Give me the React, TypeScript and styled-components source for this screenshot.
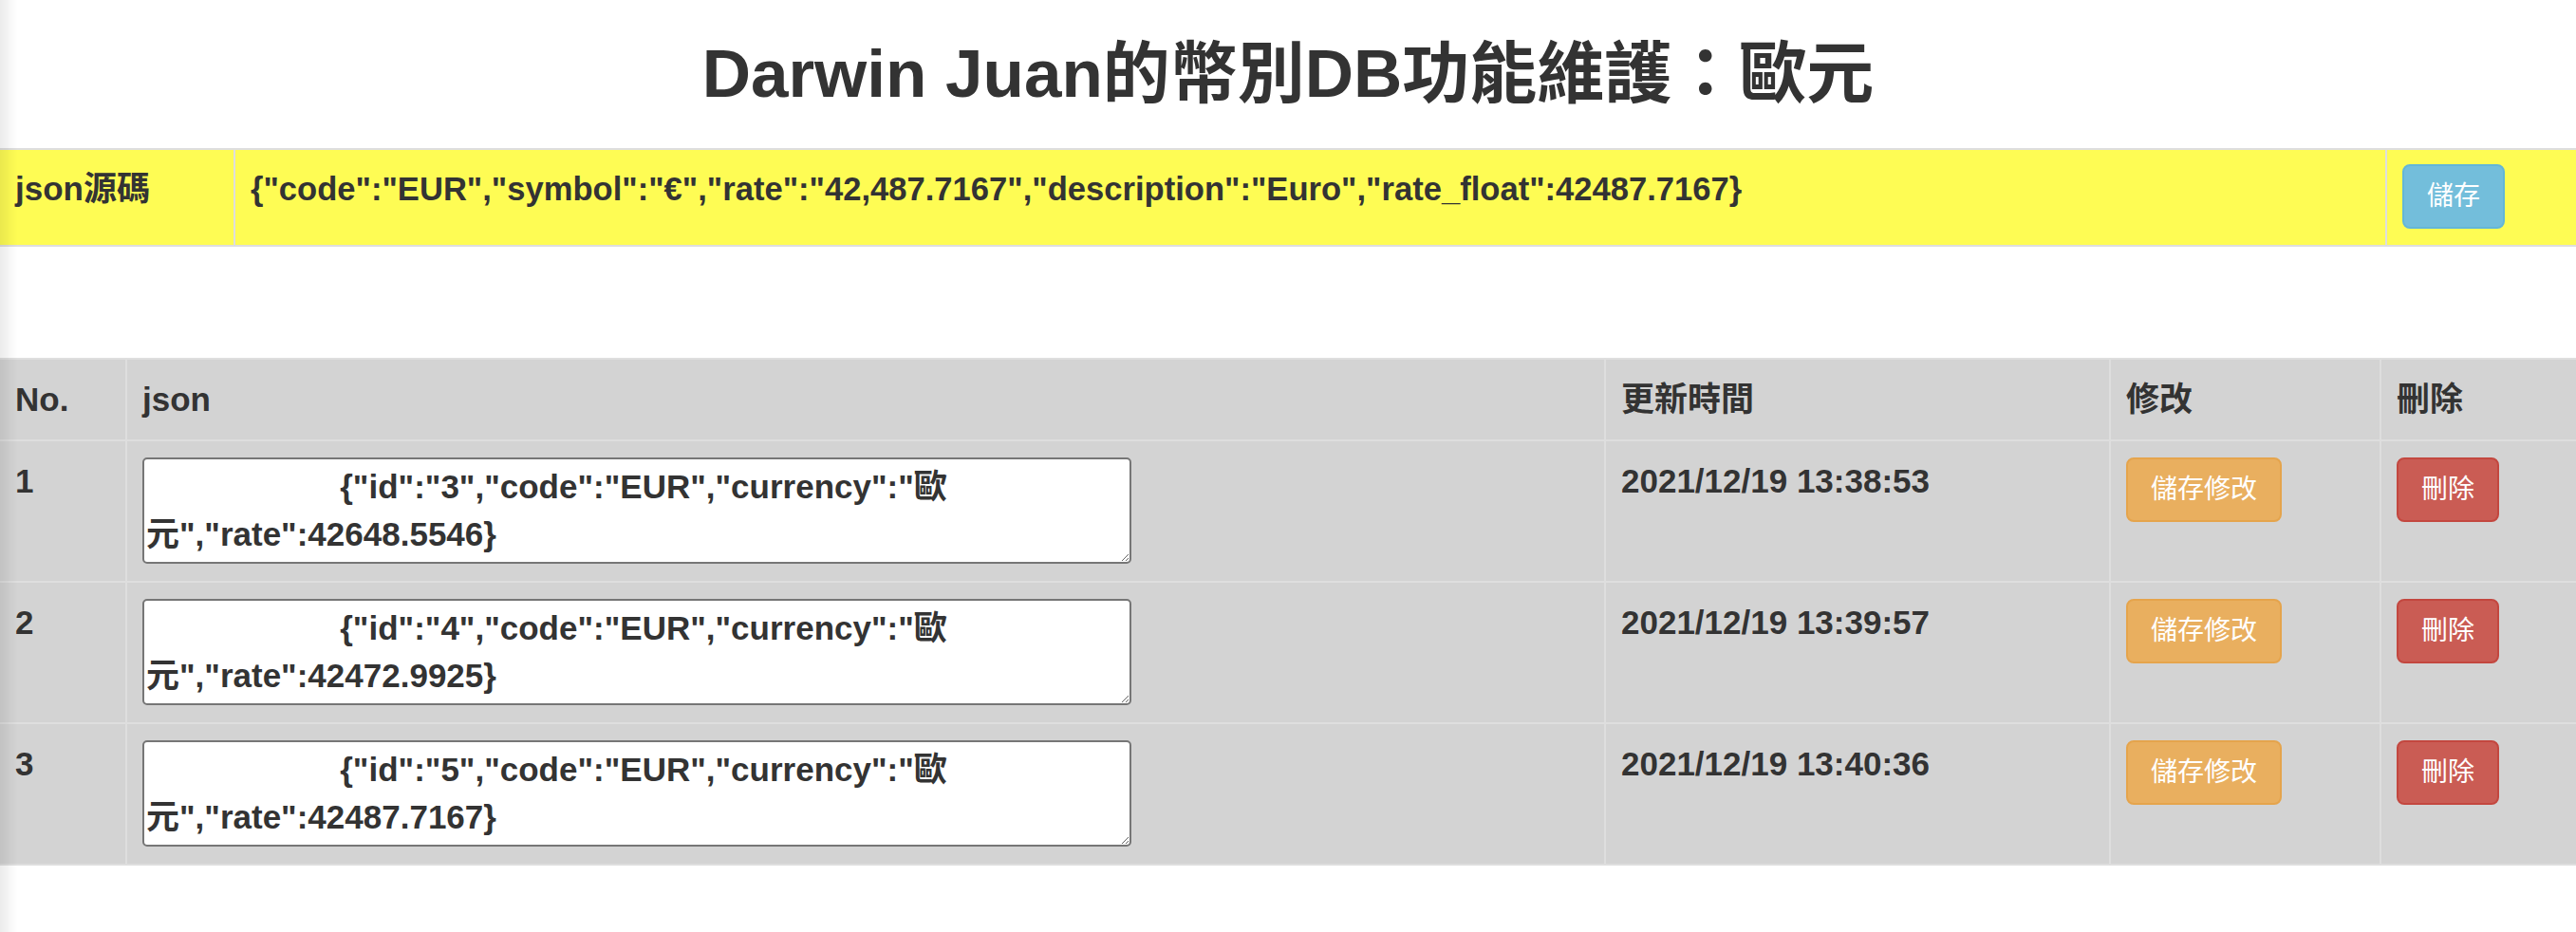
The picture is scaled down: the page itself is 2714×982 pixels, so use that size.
import React from "react";
import styled, { createGlobalStyle, css } from "styled-components";

const FONT = '"Liberation Sans", "Noto Sans CJK TC", Arial, sans-serif';

const GlobalStyle = createGlobalStyle`
  html, body {
    margin: 0;
    padding: 0;
    background: #ffffff;
  }
  body {
    font-family: ${FONT};
    font-size: 35px;
    line-height: 50px;
    font-weight: 700;
    color: #333333;
  }
`;

const rows = [
  { no: 1, id: "3", rate: "42648.5546", time: "2021/12/19 13:38:53" },
  { no: 2, id: "4", rate: "42472.9925", time: "2021/12/19 13:39:57" },
  { no: 3, id: "5", rate: "42487.7167", time: "2021/12/19 13:40:36" },
];

const sourceJson =
  '{"code":"EUR","symbol":"€","rate":"42,487.7167","description":"Euro","rate_float":42487.7167}';

const indent = " ".repeat(21);

const App = () => {
  return (
    <Page>
      <GlobalStyle />
      <Title>Darwin Juan的幣別DB功能維護：歐元</Title>

      <Table $bg="#fefc54">
        <colgroup>
          <col style={{ width: 247 }} />
          <col style={{ width: 2267 }} />
          <col style={{ width: 200 }} />
        </colgroup>
        <tbody>
          <tr>
            <Cell $top={16} $bottom={16}>json源碼</Cell>
            <Cell $top={16} $bottom={16} $tight>{sourceJson}</Cell>
            <Cell $top={15} $bottom={17}>
              <Button $variant="info">儲存</Button>
            </Cell>
          </tr>
        </tbody>
      </Table>

      <Table $bg="#d3d3d3" $gap>
        <colgroup>
          <col style={{ width: 133 }} />
          <col style={{ width: 1558 }} />
          <col style={{ width: 532 }} />
          <col style={{ width: 285 }} />
          <col style={{ width: 206 }} />
        </colgroup>
        <thead>
          <tr>
            <HeadCell>No.</HeadCell>
            <HeadCell>json</HeadCell>
            <HeadCell>更新時間</HeadCell>
            <HeadCell>修改</HeadCell>
            <HeadCell>刪除</HeadCell>
          </tr>
        </thead>
        <tbody>
          {rows.map((r) => (
            <tr key={r.no}>
              <Cell $top={17} $bottom={18}>{r.no}</Cell>
              <Cell $top={17} $bottom={18}>
                <JsonArea
                  defaultValue={`${indent}{"id":"${r.id}","code":"EUR","currency":"歐元","rate":${r.rate}}`}
                />
              </Cell>
              <Cell $top={17} $bottom={18}>{r.time}</Cell>
              <Cell $top={17} $bottom={18}>
                <Button $variant="warning">儲存修改</Button>
              </Cell>
              <Cell $top={17} $bottom={18}>
                <Button $variant="danger">刪除</Button>
              </Cell>
            </tr>
          ))}
        </tbody>
      </Table>
    </Page>
  );
};
export default App;

const Page = styled.div`
  min-height: 982px;

  &::before {
    content: "";
    position: fixed;
    left: 0;
    top: 0;
    bottom: 0;
    width: 18px;
    pointer-events: none;
    background: linear-gradient(to right, rgba(0, 0, 0, 0.08), rgba(0, 0, 0, 0));
    z-index: 5;
  }
`;

const Title = styled.h1`
  margin: 38px 0 38px;
  font-family: ${FONT};
  font-size: 71px;
  line-height: 80px;
  font-weight: 700;
  text-align: center;
  color: #333333;
`;

const Table = styled.table<{ $bg: string; $gap?: boolean }>`
  width: 100%;
  table-layout: fixed;
  border-collapse: collapse;
  background: ${(p) => p.$bg};
  border-top: 2px solid #dedede;
  border-bottom: 2px solid #dedede;
  margin-top: ${(p) => (p.$gap ? "117px" : "0")};
`;

const cellBorders = css`
  border-left: 2px solid #dedede;
  border-top: 2px solid #dedede;
  &:first-child {
    border-left: none;
  }
`;

const HeadCell = styled.th`
  ${cellBorders};
  padding: 17px 16px;
  text-align: left;
  vertical-align: bottom;
  font-weight: 700;
  line-height: 50px;
`;

const Cell = styled.td<{ $top: number; $bottom: number; $tight?: boolean }>`
  ${cellBorders};
  padding: ${(p) => `${p.$top}px 16px ${p.$bottom}px`};
  vertical-align: top;
  line-height: 50px;
  white-space: nowrap;
  font-size: ${(p) => (p.$tight ? "34.6px" : "35px")};
`;

const JsonArea = styled.textarea`
  display: block;
  box-sizing: border-box;
  width: 1042px;
  height: 112px;
  margin: 0;
  padding: 4px 2px;
  border: 2px solid #767676;
  border-radius: 5px;
  background: #ffffff;
  font-family: ${FONT};
  font-size: 35px;
  line-height: 50px;
  font-weight: 700;
  color: #333333;
  white-space: pre-wrap;
  overflow: hidden;
`;

const variants = {
  info: { bg: "#73bedb", border: "#63b6d8" },
  warning: { bg: "#e9af5f", border: "#e5a44c" },
  danger: { bg: "#ca5c54", border: "#c3473f" },
};

const Button = styled.button<{ $variant: keyof typeof variants }>`
  display: inline-block;
  box-sizing: border-box;
  margin: 0;
  padding: 12px 24px;
  border: 2px solid ${(p) => variants[p.$variant].border};
  border-radius: 8px;
  background: ${(p) => variants[p.$variant].bg};
  color: #ffffff;
  font-family: ${FONT};
  font-size: 28px;
  line-height: 40px;
  font-weight: 400;
  white-space: nowrap;
  cursor: pointer;
`;
